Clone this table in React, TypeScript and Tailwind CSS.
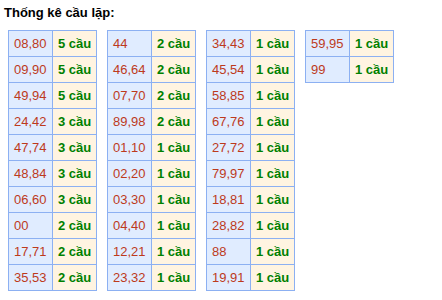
import React from "react";

const tables: [string, number][][] = [
  [
    ["08,80", 5], ["09,90", 5], ["49,94", 5], ["24,42", 3], ["47,74", 3],
    ["48,84", 3], ["06,60", 3], ["00", 2], ["17,71", 2], ["35,53", 2],
  ],
  [
    ["44", 2], ["46,64", 2], ["07,70", 2], ["89,98", 2], ["01,10", 1],
    ["02,20", 1], ["03,30", 1], ["04,40", 1], ["12,21", 1], ["23,32", 1],
  ],
  [
    ["34,43", 1], ["45,54", 1], ["58,85", 1], ["67,76", 1], ["27,72", 1],
    ["79,97", 1], ["18,81", 1], ["28,82", 1], ["88", 1], ["19,91", 1],
  ],
  [["59,95", 1], ["99", 1]],
];

export default function App() {
  return (
    <div
      className="w-[442px] h-[300px] bg-white overflow-hidden"
      style={{ fontFamily: '"Liberation Sans", Arial, sans-serif' }}
    >
      <div className="pl-1 pt-[5px] text-[13px] leading-[15px] font-bold text-black">
        Thống kê cầu lặp:
      </div>
      <div className="flex items-start gap-[10px] pl-2 mt-[10px]">
        {tables.map((rows, ti) => (
          <div key={ti} className="w-[89px] border-l border-t border-[#8cb0f2]">
            {rows.map(([num, c], ri) => (
              <div key={ri} className="flex h-[26px]">
                <div className="w-[44px] h-[26px] flex items-center pl-[5px] bg-[#e0ecff] border-r border-b border-[#8cb0f2] text-[13px] text-[#bd3a1c]">
                  {num}
                </div>
                <div className="w-[44px] h-[26px] flex items-center pl-[5px] bg-[#fff4e1] border-r border-b border-[#8cb0f2] text-[13px] font-bold text-[#008000] whitespace-nowrap">
                  {c} cầu
                </div>
              </div>
            ))}
          </div>
        ))}
      </div>
    </div>
  );
}
